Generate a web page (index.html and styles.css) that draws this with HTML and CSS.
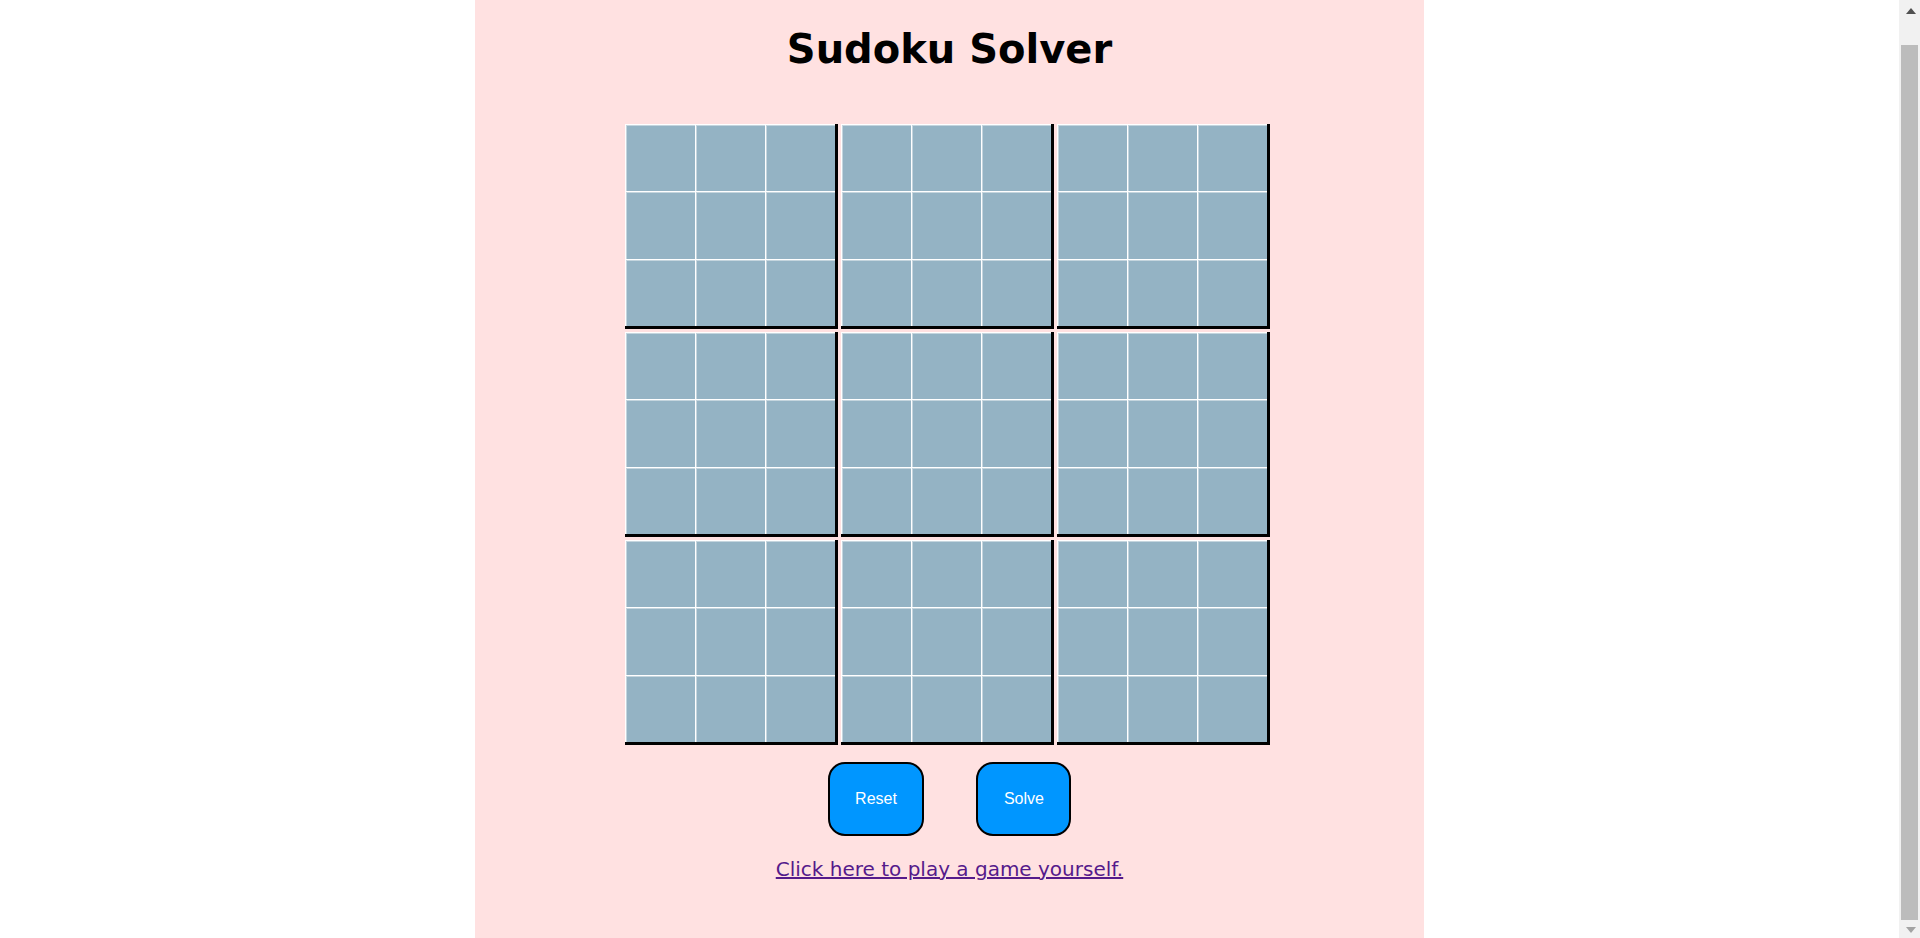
FILE: index.html
```html
<!DOCTYPE html>
<html lang="en">
<head>
<meta charset="utf-8">
<title>Sudoku Solver</title>
<link rel="stylesheet" href="styles.css">
</head>
<body>
<main class="page">
  <h1 class="title">Sudoku Solver</h1>
  <div class="board">
    <div class="block"><div class="cell"></div><div class="cell"></div><div class="cell"></div><div class="cell"></div><div class="cell"></div><div class="cell"></div><div class="cell"></div><div class="cell"></div><div class="cell"></div></div>
    <div class="block"><div class="cell"></div><div class="cell"></div><div class="cell"></div><div class="cell"></div><div class="cell"></div><div class="cell"></div><div class="cell"></div><div class="cell"></div><div class="cell"></div></div>
    <div class="block"><div class="cell"></div><div class="cell"></div><div class="cell"></div><div class="cell"></div><div class="cell"></div><div class="cell"></div><div class="cell"></div><div class="cell"></div><div class="cell"></div></div>
    <div class="block"><div class="cell"></div><div class="cell"></div><div class="cell"></div><div class="cell"></div><div class="cell"></div><div class="cell"></div><div class="cell"></div><div class="cell"></div><div class="cell"></div></div>
    <div class="block"><div class="cell"></div><div class="cell"></div><div class="cell"></div><div class="cell"></div><div class="cell"></div><div class="cell"></div><div class="cell"></div><div class="cell"></div><div class="cell"></div></div>
    <div class="block"><div class="cell"></div><div class="cell"></div><div class="cell"></div><div class="cell"></div><div class="cell"></div><div class="cell"></div><div class="cell"></div><div class="cell"></div><div class="cell"></div></div>
    <div class="block"><div class="cell"></div><div class="cell"></div><div class="cell"></div><div class="cell"></div><div class="cell"></div><div class="cell"></div><div class="cell"></div><div class="cell"></div><div class="cell"></div></div>
    <div class="block"><div class="cell"></div><div class="cell"></div><div class="cell"></div><div class="cell"></div><div class="cell"></div><div class="cell"></div><div class="cell"></div><div class="cell"></div><div class="cell"></div></div>
    <div class="block"><div class="cell"></div><div class="cell"></div><div class="cell"></div><div class="cell"></div><div class="cell"></div><div class="cell"></div><div class="cell"></div><div class="cell"></div><div class="cell"></div></div>
  </div>
  <div class="actions">
    <button class="btn" type="button">Reset</button>
    <button class="btn" type="button">Solve</button>
  </div>
  <p class="play"><a class="play-link" href="#">Click here to play a game yourself.</a></p>
</main>
<div class="scrollbar" aria-hidden="true">
  <svg class="sb-arrow sb-up" width="10" height="6" viewBox="0 0 10 6"><path d="M5 0 L10 6 L0 6 Z" fill="#505050"/></svg>
  <div class="sb-track"><div class="sb-thumb"></div></div>
  <svg class="sb-arrow sb-down" width="10" height="6" viewBox="0 0 10 6"><path d="M0 0 L10 0 L5 6 Z" fill="#a3a3a3"/></svg>
</div>
<script src="script.js"></script>
</body>
</html>
```

FILE: styles.css
```css
html, body {
  margin: 0;
  padding: 0;
  background: #ffffff;
}

body {
  padding-right: 21px;
}

.page {
  width: 949px;
  margin: 0 auto;
  background: #ffe1e1;
  padding: 56px 0 57px;
  display: flex;
  flex-direction: column;
  align-items: center;
  font-family: "DejaVu Sans", Verdana, sans-serif;
}

.title {
  margin: 0 0 51px;
  font-size: 40px;
  line-height: 47px;
  font-weight: bold;
  color: #000;
}

.board {
  display: grid;
  grid-template-columns: repeat(3, 213px);
  grid-template-rows: repeat(3, 205px);
  gap: 3px;
  margin-right: 4px;
}

.block {
  display: grid;
  grid-template-columns: repeat(3, 70px);
  grid-template-rows: repeat(3, 1fr);
  width: 210px;
  height: 202px;
  border-right: 3px solid #000;
  border-bottom: 3px solid #000;
}

.cell {
  background: #94b3c4;
  border-left: 1px solid #ffffff;
  border-top: 1px solid #ffffff;
  box-shadow: inset 1px 1px 0 rgba(255, 255, 255, 0.45);
}

.actions {
  display: flex;
  gap: 52px;
  margin-top: 17px;
}

.btn {
  font-family: "Liberation Sans", Arial, sans-serif;
  font-size: 16px;
  line-height: 18px;
  color: #ffffff;
  background: #0096ff;
  border: 2px solid #000;
  border-radius: 17px;
  padding: 26px 25.5px;
  margin: 0;
}

.play {
  margin: 22px 0 0;
  font-size: 20px;
  line-height: 23px;
}

.play-link {
  color: #551a8b;
  text-decoration: underline;
}

/* fake classic scrollbar (scrolled to the bottom) */
.scrollbar {
  position: fixed;
  top: 0;
  right: 0;
  width: 21px;
  height: 100vh;
  background: #f1f1f1;
  display: flex;
  flex-direction: column;
  align-items: center;
}

.sb-arrow {
  flex: none;
  display: block;
}

.sb-up {
  margin: 8px 0 0 2px;
}

.sb-track {
  flex: 1;
  align-self: stretch;
  display: flex;
  flex-direction: column;
  justify-content: flex-end;
  padding: 31px 2px 1px 2px;
}

.sb-thumb {
  height: 875px;
  background: #bcbcbc;
}

.sb-down {
  margin: 6px 0 6px 2px;
}
```

FILE: script.js
```js
window.scrollTo(0, document.documentElement.scrollHeight);
```
